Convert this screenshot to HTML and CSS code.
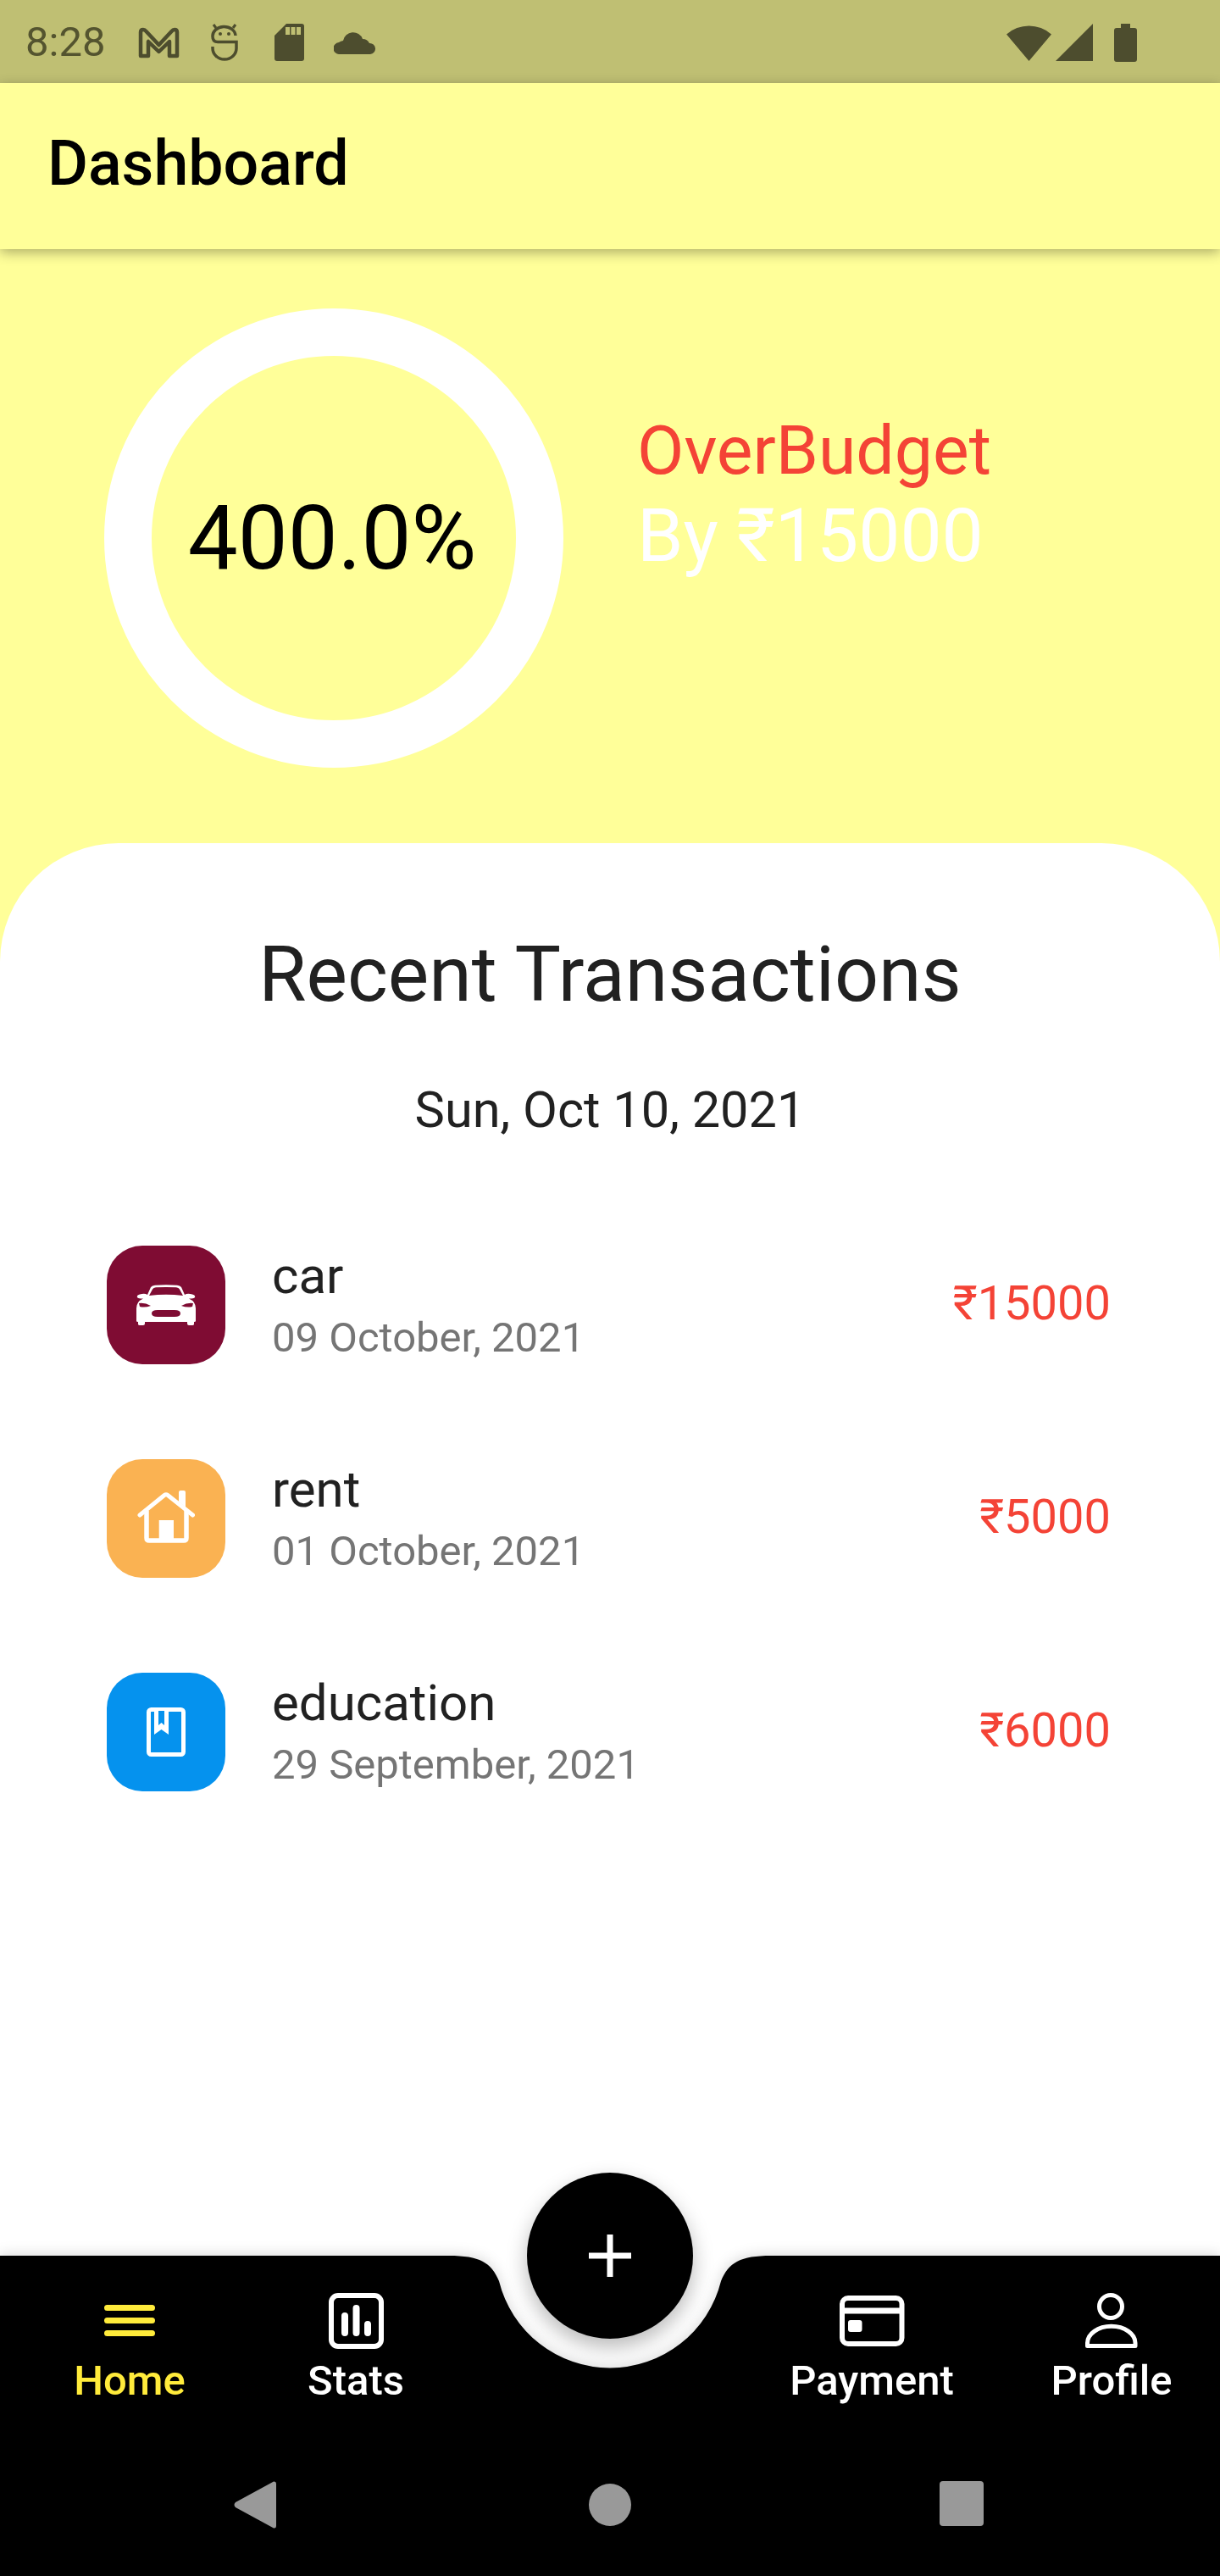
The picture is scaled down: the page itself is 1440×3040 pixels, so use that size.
FILE: index.html
```html
<!DOCTYPE html>
<html lang="en">
<head>
<meta charset="utf-8">
<title>Dashboard</title>
<link rel="stylesheet" href="styles.css">
</head>
<body>
<div class="phone">
  <header class="status">
    <div class="status-left">
      <span class="time">8:28</span>
      <svg class="si si-m" viewBox="0 0 49 37"><path d="M3 34V6Q3 3 6 3Q8 3 9.500 5L24.500 21L39.500 5Q41 3 43 3Q46 3 46 6V34H37V17L24.500 29L12 17V34Z" fill="none" stroke="#4d4d2e" stroke-width="4.500" stroke-linejoin="round"/></svg>
      <svg class="si si-robot" viewBox="0 0 32 44"><path d="M29 14A13.500 11 0 0 0 2 15Q2 21.500 8 21.500H30V29A14 13 0 0 1 2 29V27" fill="none" stroke="#4d4d2e" stroke-width="3.500"/><path d="M3 1L6 5M29 1L26 5" stroke="#4d4d2e" stroke-width="3"/><circle cx="11" cy="12" r="2" fill="#4d4d2e"/><circle cx="21" cy="12" r="2" fill="#4d4d2e"/></svg>
      <svg class="si si-sd" viewBox="0 0 35 44"><path d="M14 0H32Q35 0 35 3V41Q35 44 32 44H3Q0 44 0 41V14Z" fill="#4d4d2e"/><path d="M13 4h5v9h-5zM19.500 4h5v9h-5zM26 4h5v9h-5z" fill="#bfbf73"/></svg>
      <svg class="si si-cloud" viewBox="0 0 49 27"><path d="M7 27A7 7 0 0 1 6 13A10 10 0 0 1 11 11A12 12 0 0 1 34 9A9 9 0 0 1 42 14A6.500 6.500 0 0 1 43 27Z" fill="#4d4d2e"/></svg>
    </div>
    <div class="status-right">
      <svg class="si si-wifi" viewBox="0 0 53 44"><path d="M0 12.500A40 40 0 0 1 53 12.500L26.500 44Z" fill="#4d4d2e"/></svg>
      <svg class="si si-signal" viewBox="0 0 44 44"><path d="M44 0V44H0Z" fill="#4d4d2e"/></svg>
      <svg class="si si-batt" viewBox="0 0 27 45"><path d="M8 0H19V5H24Q27 5 27 8V42Q27 45 24 45H3Q0 45 0 42V8Q0 5 3 5H8Z" fill="#4d4d2e"/></svg>
    </div>
  </header>
  <div class="appbar"><h1 class="appbar-title">Dashboard</h1></div>
  <section class="hero">
    <div class="ring"><span class="ring-text">400.0%</span></div>
    <div class="budget">
      <div class="budget-over">OverBudget</div>
      <div class="budget-by">By ₹15000</div>
    </div>
  </section>
  <main class="card">
    <h2 class="card-title">Recent Transactions</h2>
    <div class="card-date">Sun, Oct 10, 2021</div>
    <ul class="tx-list">
      <li class="tx">
        <div class="tile tile-car">
          <svg class="ti-car" viewBox="0 0 70 49"><path fill="#fff" d="M13 12L17 3Q18.500 1 22 .8Q35 -.3 48 .8Q51.500 1 53 3L57 12Q60 10 66 11.500Q70 12.500 69 15Q68 16.500 62 16.500Q70 20 70 28V43Q70 44 68 44V46.500Q68 48 66 48H62Q60 48 60 46V44H10V46Q10 48 8 48H4Q2 48 2 46.500V44Q0 44 0 43V28Q0 20 8 16.500Q2 16.500 1 15Q0 12.500 4 11.500Q10 10 13 12Z"/><path fill="#7f0c33" d="M15 13L19 5.500Q20 3.500 23 3.300Q35 2.500 47 3.300Q50 3.500 51 5.500L55 13Q35 10.500 15 13ZM3 22Q10 21 17 25Q10 27.500 4 26ZM67 22Q60 21 53 25Q60 27.500 66 26ZM18 34Q18 30 25 30H45Q52 30 52 34Q52 38 45 38H25Q18 38 18 34Z"/></svg>
        </div>
        <div class="tx-info"><div class="tx-name">car</div><div class="tx-date">09 October, 2021</div></div>
        <div class="tx-amt">₹15000</div>
      </li>
      <li class="tx">
        <div class="tile tile-rent">
          <svg class="ti-house" viewBox="0 0 68 66"><path d="M3 29L32 5.500Q34 4 36 5.500L65.500 29" fill="none" stroke="#fff" stroke-width="5" stroke-linecap="round"/><path d="M11 24V56Q11 59 14 59H55Q58 59 58 56V24" fill="none" stroke="#fff" stroke-width="5.500"/><path d="M49 2Q49 0 51 0H55Q57 0 57 2V20L49 13ZM25.700 35H43V58H25.700Z" fill="#fff"/></svg>
        </div>
        <div class="tx-info"><div class="tx-name">rent</div><div class="tx-date">01 October, 2021</div></div>
        <div class="tx-amt">₹5000</div>
      </li>
      <li class="tx">
        <div class="tile tile-edu">
          <svg class="ti-book" viewBox="0 0 46 58"><rect x="2.500" y="2.500" width="41" height="53" rx="3" fill="none" stroke="#fff" stroke-width="5"/><path d="M9 4H26V32L17.500 26L9 32Z" fill="#fff"/><path d="M14 4H21V21L17.500 18L14 21Z" fill="#0592ee"/></svg>
        </div>
        <div class="tx-info"><div class="tx-name">education</div><div class="tx-date">29 September, 2021</div></div>
        <div class="tx-amt">₹6000</div>
      </li>
    </ul>
  </main>
  <footer class="nav">
    <svg class="nav-shape" viewBox="0 0 1440 378"><path d="M0 0H530C566 0 580 8 589 30A135 135 0 0 0 851 30C860 8 874 0 910 0H1440V378H0Z" fill="#000"/></svg>
    <button class="fab" type="button"><svg class="fab-plus" viewBox="0 0 50 50"><path d="M21.500 0h7v21.500H50v7H28.500V50h-7V28.500H0v-7h21.500z" fill="#fff"/></svg></button>
    <div class="tabs">
      <div class="tab tab-on">
        <svg class="tab-ic" viewBox="0 0 80 72"><path d="M13.500 20.500H66.500M13.500 35.500H66.500M13.500 50.500H66.500" stroke="#ffeb3b" stroke-width="7" stroke-linecap="round"/></svg>
        <span class="tab-label">Home</span>
      </div>
      <div class="tab">
        <svg class="tab-ic" viewBox="0 0 80 72"><rect x="11" y="6" width="59" height="60" rx="8" fill="none" stroke="#fff" stroke-width="6"/><path d="M27 30V50M40.500 21V50M54 40V50" stroke="#fff" stroke-width="8" stroke-linecap="round"/></svg>
        <span class="tab-label">Stats</span>
      </div>
      <div class="tab-gap"></div>
      <div class="tab">
        <svg class="tab-ic" viewBox="0 0 80 72"><rect x="5" y="9" width="70.500" height="54" rx="7" fill="none" stroke="#fff" stroke-width="6"/><path d="M4 24H76" stroke="#fff" stroke-width="7"/><rect x="12" y="35" width="16.500" height="14" rx="3" fill="#fff"/></svg>
        <span class="tab-label">Payment</span>
      </div>
      <div class="tab">
        <svg class="tab-ic" viewBox="0 0 80 72"><circle cx="39" cy="19" r="13.500" fill="none" stroke="#fff" stroke-width="5"/><path d="M11.500 65.500V62A28 19.500 0 0 1 68 62V65.500Z" fill="none" stroke="#fff" stroke-width="5" stroke-linejoin="round"/></svg>
        <span class="tab-label">Profile</span>
      </div>
    </div>
    <div class="sysnav">
      <svg class="sys-back" viewBox="0 0 50 56"><path d="M47 0.500Q50 0 50 3V53Q50 56 47 55.500L2 31Q-1 28 2 25Z" fill="#999"/></svg>
      <span class="sys-home"></span>
      <span class="sys-recent"></span>
    </div>
  </footer>
</div>
</body>
</html>
```
FILE: styles.css
```css
* { box-sizing: border-box; }
html, body { margin: 0; padding: 0; }
body { font-family: Roboto, "Liberation Sans", sans-serif; background: #ffff99; }
.phone { width: 1440px; height: 3040px; display: flex; flex-direction: column; overflow: hidden; background: #ffff99; position: relative; }

.status { height: 98px; flex: none; background: #bfbf73; display: flex; justify-content: space-between; align-items: center; padding: 2px 98px 0 30px; }
.status-left { display: flex; align-items: center; }
.status-right { display: flex; align-items: center; }
.si { display: block; flex: none; }
.time { font-size: 49px; line-height: 98px; color: #54542f; width: 133px; font-weight: 400; }
.si-m { width: 49px; height: 37px; margin-right: 37px; }
.si-robot { width: 32px; height: 44px; margin-right: 43px; }
.si-sd { width: 35px; height: 44px; margin-right: 35px; }
.si-cloud { width: 49px; height: 27px; }
.si-wifi { width: 53px; height: 44px; margin-right: 5px; }
.si-signal { width: 44px; height: 44px; margin-right: 25px; }
.si-batt { width: 27px; height: 45px; }

.appbar { height: 196px; flex: none; background: #ffff99; display: flex; align-items: center; padding: 0 0 6px 56px; box-shadow: 0 4px 14px rgba(0,0,0,.32); position: relative; z-index: 2; }
.appbar-title { margin: 0; font-size: 73.500px; font-weight: 500; color: #000; }

.hero { height: 701px; flex: none; display: flex; align-items: flex-start; padding: 70px 0 0 123px; }
.ring { width: 542px; height: 542px; flex: none; border-radius: 50%; border: 56px solid #fff; display: flex; align-items: center; justify-content: center; margin-right: 87px; }
.ring-text { font-size: 105px; color: #000; white-space: nowrap; margin-right: 4px; }
.budget { padding-top: 118px; line-height: 100px; }
.budget-over { color: #f44336; font-size: 80.500px; }
.budget-by { color: #fff; font-size: 87.500px; }

.card { flex: 1; background: #fff; border-radius: 140px 140px 0 0; padding-top: 105px; }
.card-title { margin: 0; text-align: center; font-size: 91.400px; font-weight: 400; line-height: 100px; color: #212121; }
.card-date { text-align: center; font-size: 59.500px; line-height: 70px; margin-top: 75px; color: #212121; }
.tx-list { list-style: none; margin: 125px 0 0; padding: 0 129px 0 126px; display: flex; flex-direction: column; gap: 112px; }
.tx { display: flex; align-items: center; height: 140px; }
.tile { width: 140px; height: 140px; flex: none; border-radius: 42px; display: flex; align-items: center; justify-content: center; margin-right: 55px; }
.tile-car { background: #7f0c33; }
.tile-rent { background: #fab252; }
.tile-edu { background: #0592ee; }
.ti-car { width: 70px; height: 49px; }
.ti-house { width: 68px; height: 66px; }
.ti-book { width: 46px; height: 58px; }
.tx-info { flex: 1; }
.tx-name { font-size: 60px; line-height: 78px; color: #212121; }
.tx-date { font-size: 49px; line-height: 68px; color: #757575; }
.tx-amt { font-size: 56px; line-height: 70px; margin-bottom: 4px; color: #f44336; }

.nav { height: 378px; flex: none; position: relative; background: #fff; }
.nav-shape { position: absolute; left: 0; top: 0; width: 1440px; height: 378px; display: block; filter: drop-shadow(0 -1px 8px rgba(0,0,0,.16)); }
.fab { position: absolute; left: 622px; top: -98px; width: 196px; height: 196px; border-radius: 50%; border: 0; padding: 0; background: #000; display: flex; align-items: center; justify-content: center; box-shadow: 0 10px 24px rgba(0,0,0,.28); z-index: 2; }
.fab-plus { width: 50px; height: 50px; display: block; }
.tabs { position: relative; display: grid; grid-template-columns: 306px 228px 340px 310px 256px; padding-top: 41px; height: 240px; }
.tab { display: flex; flex-direction: column; align-items: center; color: #fff; }
.tab-on { color: #ffeb3b; }
.tab-ic { width: 80px; height: 72px; display: block; }
.tab-label { font-size: 49px; font-weight: 500; line-height: 60px; margin-top: 5px; }
.sysnav { position: relative; height: 138px; display: flex; align-items: flex-start; padding: 26px 0 0 276px; }
.sys-back { width: 50px; height: 56px; display: block; margin-right: 369px; }
.sys-home { width: 50px; height: 50px; border-radius: 50%; background: #999; margin: 3px 364px 0 0; }
.sys-recent { width: 52px; height: 53px; border-radius: 4px; background: #999; }
```
